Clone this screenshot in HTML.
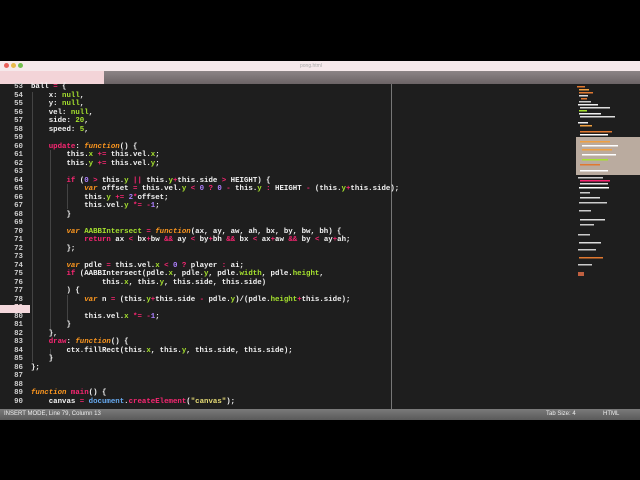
<!DOCTYPE html>
<html><head><meta charset="utf-8"><style>
body{margin:0;width:640px;height:480px;background:#000;position:relative;overflow:hidden;font-family:"Liberation Mono",monospace}
#title{position:absolute;left:0;top:61px;width:640px;height:10px;background:#f6e9eb}
#tabs{position:absolute;left:0;top:71px;width:640px;height:13px;background:linear-gradient(#8c8486,#6c6466)}
#tab{position:absolute;left:0;top:71px;width:104px;height:13px;background:#f3d4d8}
#code{position:absolute;left:0;top:84px;width:640px;height:325px;background:#1e1e1e}
#status{position:absolute;left:0;top:409px;width:640px;height:11px;background:linear-gradient(#7a7a7a,#5a5a5a);font-family:"Liberation Sans",sans-serif;font-size:6px;color:#eee;line-height:11px}
.l{position:absolute;left:0;height:8.5px;font-size:7.4px;line-height:8.5px;font-weight:bold;color:#f2f2f2;white-space:pre}
.n{position:absolute;left:8px;width:15px;text-align:right;color:#cfcfcf}
.c{position:absolute;left:31px}
.k{color:#f92672}.f{color:#fd971f;font-style:italic}.g{color:#a6e22e}.p{color:#ae81ff}.y{color:#e6db74}.b{color:#66a9ef}
.dot{position:absolute;top:63px;width:5px;height:5px;border-radius:50%}
.ig{position:absolute;width:1px;background:#444}
</style></head><body>
<div id="title"></div><div id="tabs"></div><div id="tab"></div>
<div class="dot" style="left:4px;background:#e9605a"></div>
<div class="dot" style="left:11px;background:#e8b94a"></div>
<div class="dot" style="left:18px;background:#73c04e"></div>
<div style="position:absolute;left:300px;top:61px;font:5px 'Liberation Sans',sans-serif;color:#aaa;line-height:10px">pong.html</div>
<div id="code">
<div style="position:absolute;left:391px;top:0;width:1px;height:325px;background:#777"></div>
<div class="ig" style="left:32px;top:8px;height:270px"></div>
<div class="ig" style="left:50px;top:66px;height:180px"></div>
<div class="ig" style="left:67px;top:100px;height:25px"></div>
<div class="ig" style="left:67px;top:211px;height:25px"></div>
<div class="ig" style="left:50px;top:265px;height:10px"></div>
<div style="position:absolute;left:576px;top:53px;width:64px;height:38px;background:#d6c4b6;opacity:.85"></div>
<div style="position:absolute;left:0;top:221px;width:30px;height:8px;background:#f4d8dc"></div>
<svg style="position:absolute;left:576px;top:0" width="64" height="325">
<g>
<rect x="1" y="2" width="8" height="1.5" fill="#e07830"/><rect x="3" y="5" width="10" height="1.5" fill="#f0a040"/><rect x="3" y="8" width="14" height="1.5" fill="#e07830"/><rect x="3" y="11" width="9" height="1.5" fill="#ddd"/><rect x="5" y="14" width="6" height="1.5" fill="#e07830"/><rect x="3" y="17" width="12" height="1.5" fill="#ccc"/><rect x="2" y="20" width="20" height="1.5" fill="#f0f0f0"/><rect x="4" y="23" width="30" height="1.5" fill="#ddd"/><rect x="3" y="26" width="8" height="1.5" fill="#a6e22e"/><rect x="3" y="29" width="22" height="1.5" fill="#f0f0f0"/><rect x="4" y="32" width="35" height="1.5" fill="#ddd"/><rect x="2" y="38" width="10" height="1.5" fill="#eee"/><rect x="4" y="41" width="12" height="1.5" fill="#f0a040"/><rect x="4" y="47" width="32" height="1.5" fill="#e07830"/><rect x="4" y="50" width="28" height="1.5" fill="#fff"/>
<rect x="4" y="57" width="30" height="1.5" fill="#f0a040"/><rect x="6" y="61" width="36" height="1.5" fill="#fff"/><rect x="6" y="65" width="30" height="1.5" fill="#f0a040"/><rect x="6" y="70" width="34" height="1.5" fill="#fff"/><rect x="6" y="75" width="26" height="1.5" fill="#a6e22e"/><rect x="4" y="80" width="20" height="1.5" fill="#e07830"/><rect x="4" y="86" width="28" height="1.5" fill="#fff"/>
<rect x="2" y="93" width="25" height="1.5" fill="#ccc"/><rect x="4" y="96" width="30" height="1.5" fill="#f92672"/><rect x="4" y="99" width="28" height="1.5" fill="#ddd"/><rect x="3" y="103" width="30" height="1.5" fill="#fff"/><rect x="4" y="108" width="10" height="1.5" fill="#ccc"/><rect x="4" y="113" width="20" height="1.5" fill="#ddd"/><rect x="3" y="118" width="28" height="1.5" fill="#ccc"/><rect x="3" y="126" width="12" height="1.5" fill="#ccc"/><rect x="4" y="135" width="25" height="1.5" fill="#ddd"/><rect x="4" y="140" width="14" height="1.5" fill="#ccc"/><rect x="2" y="150" width="12" height="1.5" fill="#ccc"/><rect x="3" y="158" width="22" height="1.5" fill="#ddd"/><rect x="2" y="165" width="18" height="1.5" fill="#ccc"/><rect x="3" y="173" width="24" height="1.5" fill="#e07830"/><rect x="2" y="180" width="14" height="1.5" fill="#ccc"/><rect x="2" y="188" width="6" height="4" fill="#c06040"/></g></svg>
</div>
<div id="status"><span style="position:absolute;left:4px">INSERT MODE, Line 79, Column 13</span><span style="position:absolute;left:546px">Tab Size: 4</span><span style="position:absolute;left:603px">HTML</span></div>
<div class="l" style="top:83px"><span class="n">53</span><span class="c">ball <span class="k">=</span> {</span></div>
<div class="l" style="top:91.5px"><span class="n">54</span><span class="c">    x: <span class="g">null</span>,</span></div>
<div class="l" style="top:100px"><span class="n">55</span><span class="c">    y: <span class="g">null</span>,</span></div>
<div class="l" style="top:108.5px"><span class="n">56</span><span class="c">    vel: <span class="g">null</span>,</span></div>
<div class="l" style="top:117px"><span class="n">57</span><span class="c">    side: <span class="g">20</span>,</span></div>
<div class="l" style="top:125.5px"><span class="n">58</span><span class="c">    speed: <span class="g">5</span>,</span></div>
<div class="l" style="top:134px"><span class="n">59</span></div>
<div class="l" style="top:142.5px"><span class="n">60</span><span class="c">    <span class="k">update</span>: <span class="f">function</span>() {</span></div>
<div class="l" style="top:151px"><span class="n">61</span><span class="c">        this.<span class="g">x</span> <span class="k">+=</span> this.vel.<span class="g">x</span>;</span></div>
<div class="l" style="top:159.5px"><span class="n">62</span><span class="c">        this.<span class="g">y</span> <span class="k">+=</span> this.vel.<span class="g">y</span>;</span></div>
<div class="l" style="top:168px"><span class="n">63</span></div>
<div class="l" style="top:176.5px"><span class="n">64</span><span class="c">        <span class="k">if</span> (<span class="p">0</span> <span class="k">&gt;</span> this.<span class="g">y</span> <span class="k">||</span> this.<span class="g">y</span><span class="k">+</span>this.side <span class="k">&gt;</span> HEIGHT) {</span></div>
<div class="l" style="top:185px"><span class="n">65</span><span class="c">            <span class="f">var</span> offset <span class="k">=</span> this.vel.<span class="g">y</span> <span class="k">&lt;</span> <span class="p">0</span> <span class="k">?</span> <span class="p">0</span> <span class="k">-</span> this.<span class="g">y</span> <span class="k">:</span> HEIGHT <span class="k">-</span> (this.<span class="g">y</span><span class="k">+</span>this.side);</span></div>
<div class="l" style="top:193.5px"><span class="n">66</span><span class="c">            this.<span class="g">y</span> <span class="k">+=</span> <span class="p">2</span><span class="k">*</span>offset;</span></div>
<div class="l" style="top:202px"><span class="n">67</span><span class="c">            this.vel.<span class="g">y</span> <span class="k">*=</span> <span class="k">-</span><span class="p">1</span>;</span></div>
<div class="l" style="top:210.5px"><span class="n">68</span><span class="c">        }</span></div>
<div class="l" style="top:219px"><span class="n">69</span></div>
<div class="l" style="top:227.5px"><span class="n">70</span><span class="c">        <span class="f">var</span> <span class="g">AABBIntersect</span> <span class="k">=</span> <span class="f">function</span>(ax, ay, aw, ah, bx, by, bw, bh) {</span></div>
<div class="l" style="top:236px"><span class="n">71</span><span class="c">            <span class="k">return</span> ax <span class="k">&lt;</span> bx<span class="k">+</span>bw <span class="k">&amp;&amp;</span> ay <span class="k">&lt;</span> by<span class="k">+</span>bh <span class="k">&amp;&amp;</span> bx <span class="k">&lt;</span> ax<span class="k">+</span>aw <span class="k">&amp;&amp;</span> by <span class="k">&lt;</span> ay<span class="k">+</span>ah;</span></div>
<div class="l" style="top:244.5px"><span class="n">72</span><span class="c">        };</span></div>
<div class="l" style="top:253px"><span class="n">73</span></div>
<div class="l" style="top:261.5px"><span class="n">74</span><span class="c">        <span class="f">var</span> pdle <span class="k">=</span> this.vel.<span class="g">x</span> <span class="k">&lt;</span> <span class="p">0</span> <span class="k">?</span> player <span class="k">:</span> ai;</span></div>
<div class="l" style="top:270px"><span class="n">75</span><span class="c">        <span class="k">if</span> (AABBIntersect(pdle.<span class="g">x</span>, pdle.<span class="g">y</span>, pdle.<span class="g">width</span>, pdle.<span class="g">height</span>,</span></div>
<div class="l" style="top:278.5px"><span class="n">76</span><span class="c">                this.<span class="g">x</span>, this.<span class="g">y</span>, this.side, this.side)</span></div>
<div class="l" style="top:287px"><span class="n">77</span><span class="c">        ) {</span></div>
<div class="l" style="top:295.5px"><span class="n">78</span><span class="c">            <span class="f">var</span> n <span class="k">=</span> (this.<span class="g">y</span><span class="k">+</span>this.side <span class="k">-</span> pdle.<span class="g">y</span>)/(pdle.<span class="g">height</span><span class="k">+</span>this.side);</span></div>
<div class="l" style="top:304px"><span class="n" style="color:#f4d8dc">79</span></div>
<div class="l" style="top:312.5px"><span class="n">80</span><span class="c">            this.vel.<span class="g">x</span> <span class="k">*=</span> <span class="k">-</span><span class="p">1</span>;</span></div>
<div class="l" style="top:321px"><span class="n">81</span><span class="c">        }</span></div>
<div class="l" style="top:329.5px"><span class="n">82</span><span class="c">    },</span></div>
<div class="l" style="top:338px"><span class="n">83</span><span class="c">    <span class="k">draw</span>: <span class="f">function</span>() {</span></div>
<div class="l" style="top:346.5px"><span class="n">84</span><span class="c">        ctx.fillRect(this.<span class="g">x</span>, this.<span class="g">y</span>, this.side, this.side);</span></div>
<div class="l" style="top:355px"><span class="n">85</span><span class="c">    }</span></div>
<div class="l" style="top:363.5px"><span class="n">86</span><span class="c">};</span></div>
<div class="l" style="top:372px"><span class="n">87</span></div>
<div class="l" style="top:380.5px"><span class="n">88</span></div>
<div class="l" style="top:389px"><span class="n">89</span><span class="c"><span class="f">function</span> <span class="k">main</span>() {</span></div>
<div class="l" style="top:397.5px"><span class="n">90</span><span class="c">    canvas <span class="k">=</span> <span class="b">document</span>.<span class="k">createElement</span>(<span class="y">"canvas"</span>);</span></div>
</body></html>
